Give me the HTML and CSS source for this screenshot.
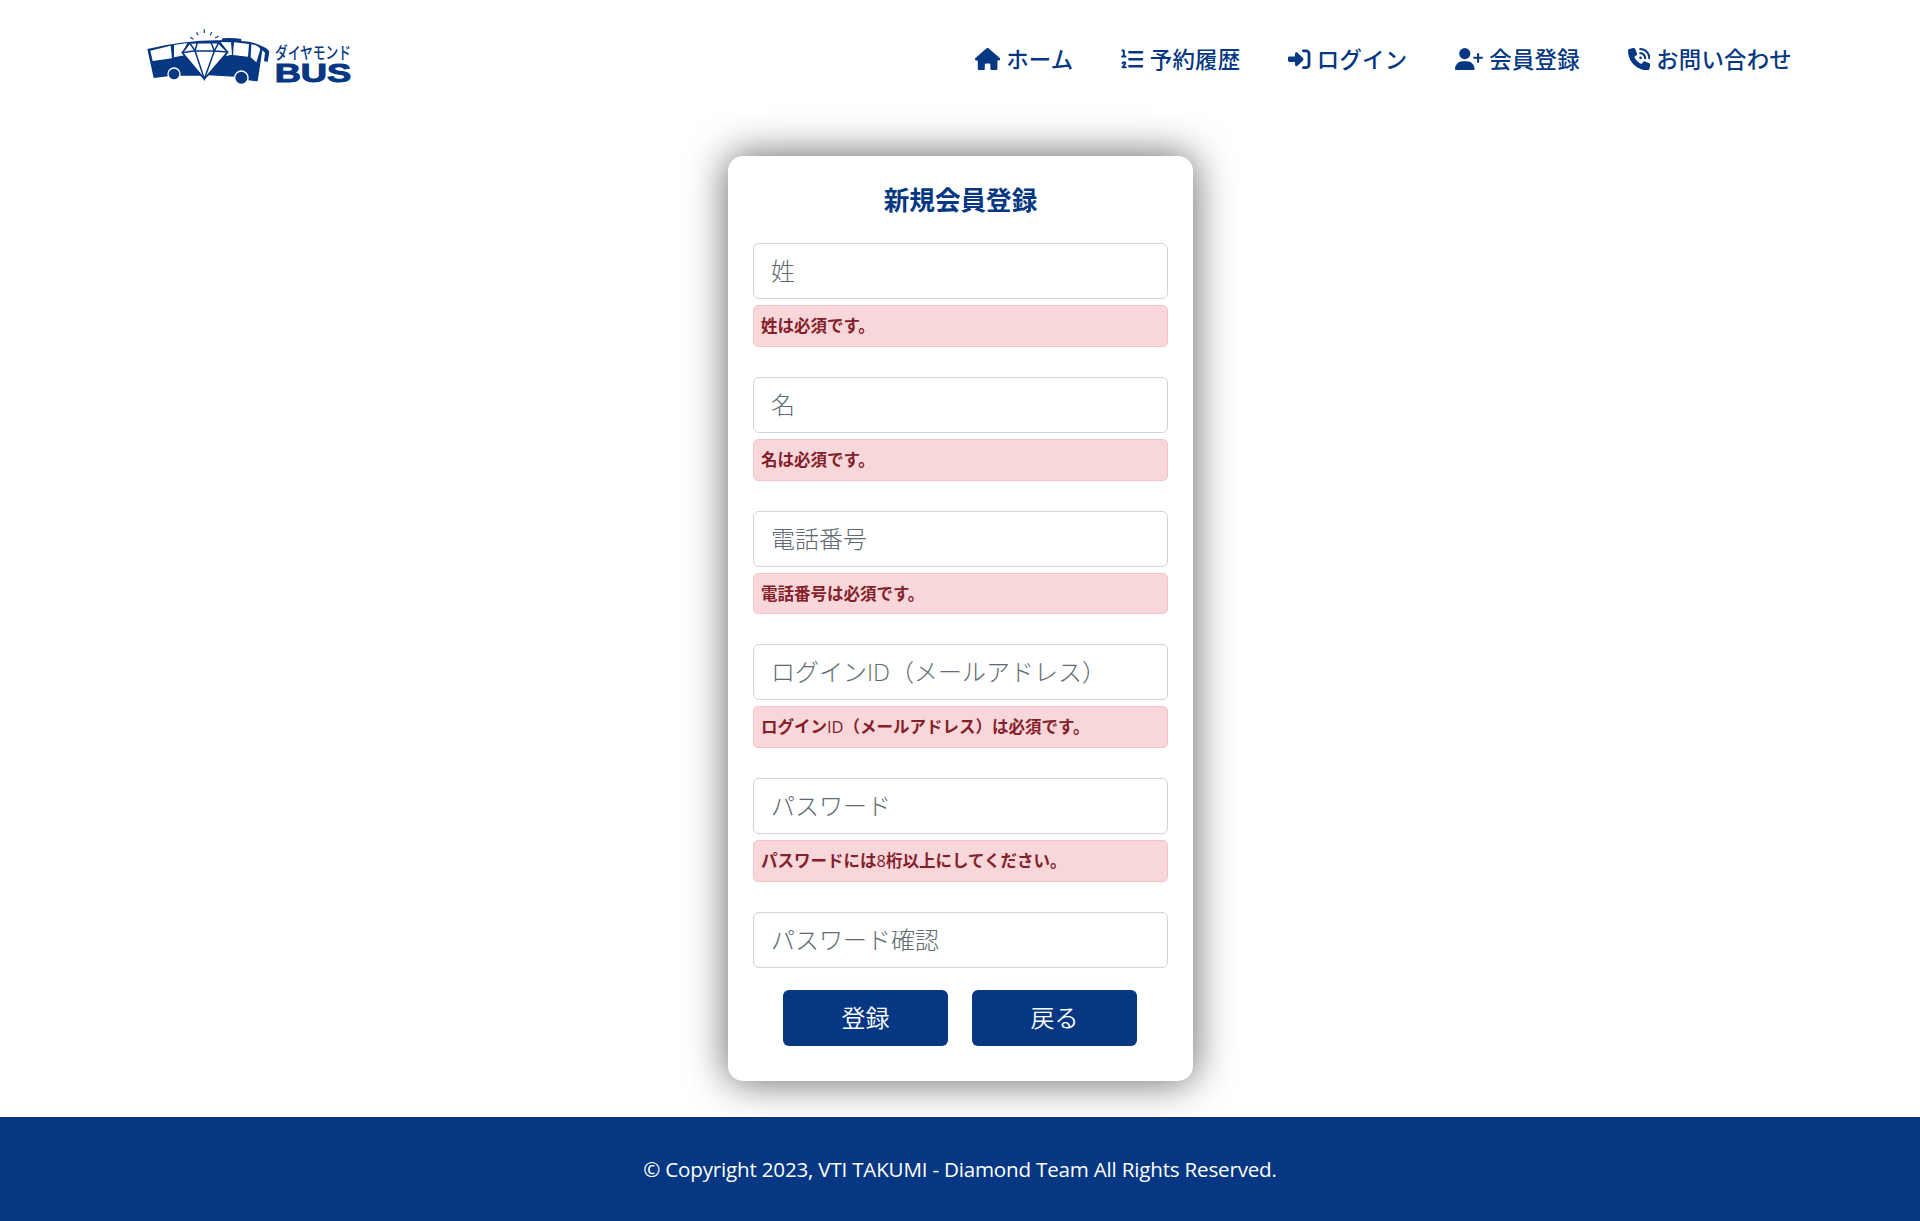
FILE: index.html
```html
<!DOCTYPE html>
<html lang="ja">
<head>
<meta charset="utf-8">
<title>新規会員登録</title>
<link rel="stylesheet" href="styles.css">
</head>
<body>
<header class="header">
  <a class="brand" href="#" aria-label="ダイヤモンドBUS">
    <svg class="brand-logo" viewBox="0 0 720 240">
      <path class="ink" d="M52 102Q170 74 275 76L277 70Q305 67 334 72V78Q372 80 396 94Q412 100 418 110L413 141L402 138L405 113L397 106L383 199L355 196A22 22 0 0 0 313 185L235 181L222 193L211 182L150 182A20 20 0 0 0 114 184L71 189Z"/>
      <path class="paper" d="M61 107L122 92L126 130L68 138ZM132 90L172 84L158 111L163 121L132 127ZM272 81L303 82L306 119L288 123L294 111ZM312 82L357 87L354 125L309 120ZM364 88Q385 90 391 103L379 142L362 127Z"/>
      <path class="gem" d="M179 84L264 82L293 111L223 192L157 113Z"/>
      <path class="facets" d="M157 113L195 107L253 108L293 111M179 84L195 107L202 83M243 82L253 108L266 83M195 107L223 192L253 108"/>
      <g class="wheels"><circle cx="132" cy="177" r="18"/><circle cx="334" cy="188" r="20"/></g>
      <path class="sparkle" d="M181 67l9 6M200 52l4 9M223 43v11M245 52l-4 9M266 64l-11 5"/>
      <text class="logo-kana" x="435" y="131" textLength="228" lengthAdjust="spacingAndGlyphs">ダイヤモンド</text>
      <text class="logo-bus" x="434" y="201" textLength="230" lengthAdjust="spacingAndGlyphs">BUS</text>
    </svg>
  </a>
  <nav class="nav">
    <a href="#"><svg class="icon icon-home" viewBox="0 0 576 512"><path d="M575.8 255.5c0 18-15 32.1-32 32.1h-32l.7 160.2c0 2.7-.2 5.4-.5 8.1V472c0 22.1-17.9 40-40 40H392c-22.1 0-40-17.9-40-40V384c0-17.7-14.3-32-32-32H256c-17.7 0-32 14.3-32 32v88c0 22.1-17.9 40-40 40H104c-22.1 0-40-17.9-40-40V287.6H32c-18 0-32-14-32-32.1c0-9 3-17 10-24L266.4 8c7-7 15-8 22-8s15 2 21 7L564.8 231.5c8 7 12 15 11 24z"/></svg>ホーム</a>
    <a href="#"><svg class="icon" viewBox="0 0 512 512"><path class="line bars" d="M192 96H480M192 256H480M192 416H480"/><path class="line digits" d="M32 56H64V192M26 196H102M34 348Q48 320 76 324Q108 334 91 366L34 440H108"/></svg>予約履歴</a>
    <a href="#"><svg class="icon" viewBox="0 0 512 512"><path d="M217.9 105.9L340.7 228.7c7.2 7.2 11.3 17.1 11.3 27.3s-4.1 20.1-11.3 27.3L217.9 406.1c-6.4 6.4-15 9.9-24 9.9c-18.7 0-33.9-15.2-33.9-33.9V320H32c-17.7 0-32-14.3-32-32v-64c0-17.7 14.3-32 32-32h128v-62.1c0-18.7 15.2-33.9 33.9-33.9c9 0 17.6 3.6 24 9.9zM352 416h64c17.7 0 32-14.3 32-32V128c0-17.7-14.3-32-32-32h-64c-17.7 0-32-14.3-32-32s14.3-32 32-32h64c53 0 96 43 96 96v256c0 53-43 96-96 96h-64c-17.7 0-32-14.3-32-32s14.3-32 32-32z"/></svg>ログイン</a>
    <a href="#"><svg class="icon icon-user" viewBox="0 0 640 512"><path d="M96 128a128 128 0 1 1 256 0A128 128 0 1 1 96 128zM0 482.3C0 383.8 79.8 304 178.3 304h91.4C368.2 304 448 383.8 448 482.3c0 16.4-13.3 29.7-29.7 29.7H29.7C13.3 512 0 498.7 0 482.3zM504 312V248H440c-13.3 0-24-10.7-24-24s10.7-24 24-24h64V136c0-13.3 10.7-24 24-24s24 10.7 24 24v64h64c13.3 0 24 10.7 24 24s-10.7 24-24 24H552v64c0 13.3-10.7 24-24 24s-24-10.7-24-24z"/></svg>会員登録</a>
    <a href="#"><svg class="icon" viewBox="0 0 512 512"><path d="M280 0C408.1 0 512 103.9 512 232c0 13.3-10.7 24-24 24s-24-10.7-24-24c0-101.6-82.4-184-184-184c-13.3 0-24-10.7-24-24s10.7-24 24-24zm8 192a32 32 0 1 1 0 64 32 32 0 1 1 0-64zm-32-72c0-13.3 10.7-24 24-24c75.1 0 136 60.9 136 136c0 13.3-10.7 24-24 24s-24-10.7-24-24c0-48.6-39.4-88-88-88c-13.3 0-24-10.7-24-24zM117.5 1.4c19.4-5.3 39.7 4.6 47.4 23.2l40 96c6.8 16.3 2.1 35.2-11.6 46.3L144 207.3c33.3 70.4 90.3 127.4 160.7 160.7L345 318.7c11.2-13.7 30-18.4 46.3-11.6l96 40c18.6 7.7 28.5 28 23.2 47.4l-24 88C481.8 499.9 466 512 448 512C200.6 512 0 311.4 0 64C0 46 12.1 30.2 29.5 25.4l88-24z"/></svg>お問い合わせ</a>
  </nav>
</header>
<main class="main">
  <form class="card">
    <h1 class="title">新規会員登録</h1>
    <div class="group"><input class="field" type="text" placeholder="姓"><p class="error">姓は必須です。</p></div>
    <div class="group"><input class="field" type="text" placeholder="名"><p class="error">名は必須です。</p></div>
    <div class="group"><input class="field" type="tel" placeholder="電話番号"><p class="error">電話番号は必須です。</p></div>
    <div class="group"><input class="field" type="text" placeholder="ログインID（メールアドレス）"><p class="error">ログイン<span class="latin">ID</span>（メールアドレス）は必須です。</p></div>
    <div class="group"><input class="field" type="password" placeholder="パスワード"><p class="error">パスワードには<span class="latin">8</span>桁以上にしてください。</p></div>
    <input class="field" type="password" placeholder="パスワード確認">
    <div class="actions"><button class="btn" type="button">登録</button><button class="btn" type="button">戻る</button></div>
  </form>
</main>
<footer class="footer"><p class="copyright">© Copyright 2023, VTI TAKUMI - Diamond Team All Rights Reserved.</p></footer>
</body>
</html>
```
FILE: styles.css
```css
* { box-sizing: border-box; }
body {
  margin: 0;
  height: 1221px;
  display: flex;
  flex-direction: column;
  background: #fff;
  color: #053782;
  font-family: "Open Sans", "Noto Sans CJK JP", sans-serif;
}
.header {
  height: 120px;
  flex: none;
  padding: 0 128px 0 130px;
  display: flex;
  justify-content: space-between;
  align-items: flex-start;
}
.brand { padding-top: 15px; }
.brand-logo { display: block; width: 240px; height: 80px; overflow: visible; }
.ink { fill: #053782; }
.paper { fill: #fff; }
.gem { fill: #fff; stroke: #053782; stroke-width: 5; }
.facets { fill: none; stroke: #053782; stroke-width: 4.5; }
.wheels { fill: #053782; stroke: #fff; stroke-width: 4; }
.sparkle { fill: none; stroke: #053782; stroke-width: 3.5; }
.logo-kana { fill: #053782; font: 500 51px "Noto Sans CJK JP", sans-serif; }
.logo-bus { fill: #053782; stroke: #053782; stroke-width: 3; font: 700 79px "Liberation Sans", sans-serif; }
.nav { display: flex; gap: 48px; padding-top: 42px; }
.nav a {
  display: flex;
  align-items: center;
  gap: 6px;
  height: 34px;
  padding-bottom: 2px;
  color: #053782;
  font-size: 22.4px;
  font-weight: 500;
  line-height: 32px;
  letter-spacing: .24px;
  font-family: "Noto Sans CJK JP", sans-serif;
  text-decoration: none;
  white-space: nowrap;
}
.icon { width: 22.4px; height: 22.4px; fill: currentColor; position: relative; top: 1px; }
.icon-home { width: 25.2px; }
.icon-user { width: 28px; }
.line { fill: none; stroke: currentColor; }
.bars { stroke-width: 58; stroke-linecap: round; }
.digits { stroke-width: 46; stroke-linejoin: round; stroke-linecap: round; }
.main { flex: 1; padding-top: 36px; display: flex; flex-direction: column; align-items: center; }
.card {
  width: 465px;
  height: 925px;
  flex: none;
  margin-left: 1px;
  padding: 25px;
  border-radius: 15px;
  background: #fff;
  box-shadow: 0 0 40px rgba(5, 5, 10, .64);
}
.title {
  margin: 0 0 22px;
  font-size: 25.6px;
  line-height: 40px;
  font-weight: 700;
  text-align: center;
}
.group { height: 133.8px; }
.field {
  display: block;
  width: 100%;
  height: 56px;
  padding: 0 17px 1px;
  border: 1px solid #ced4da;
  border-radius: 6px;
  background: #fff;
  font: 300 24px "Open Sans", "Noto Sans CJK JP", sans-serif;
}
.field::placeholder { color: #616a72; opacity: 1; }
.error {
  height: 41.8px;
  margin: 6px 0 0;
  padding: 0 7px;
  border: 1px solid #f5c2c7;
  border-radius: 5px;
  background: #f8d7da;
  color: #842029;
  font-size: 16.5px;
  font-weight: 700;
  line-height: 40px;
}
.latin { font-weight: 400; }
.actions { display: flex; gap: 24px; padding: 22px 0 0 30px; }
.btn {
  width: 165px;
  height: 56px;
  padding: 0 0 2px;
  border: 0;
  border-radius: 6px;
  background: #053782;
  color: #fff;
  font: 350 24px "Noto Sans CJK JP", sans-serif;
}
.footer {
  height: 104px;
  flex: none;
  display: flex;
  align-items: center;
  justify-content: center;
  background: #053782;
}
.copyright { margin: 0; color: #fff; font: 400 20.6px "Open Sans", sans-serif; letter-spacing: -.2px; }
```
